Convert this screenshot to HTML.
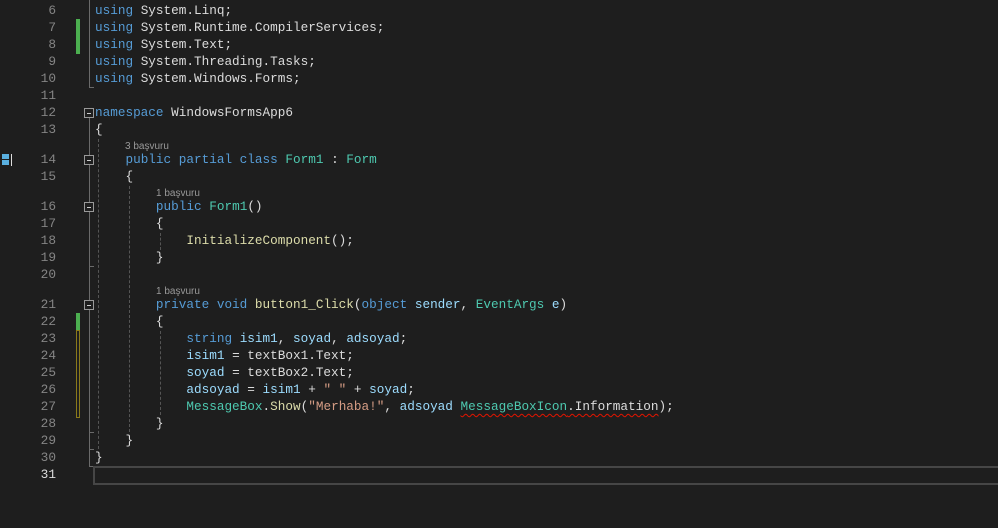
<!DOCTYPE html>
<html><head><meta charset="utf-8"><style>
html,body{margin:0;padding:0;background:#1e1e1e;width:998px;height:528px;overflow:hidden;position:relative}
.l{position:absolute;left:95px;height:17px;line-height:17px;font-family:"Liberation Mono",monospace;font-size:12.7px;color:#dcdcdc;white-space:pre}
.n{position:absolute;width:56px;text-align:right;left:0;height:17px;line-height:17px;font-family:"Liberation Mono",monospace;font-size:12.8px;color:#858585}
.lens{position:absolute;font-family:"Liberation Sans",sans-serif;font-size:10px;color:#999;height:13px;line-height:13px}
.k{color:#569cd6}.t{color:#4ec9b0}.v{color:#9cdcfe}.m{color:#dcdcaa}.s{color:#d69d85}
.box{position:absolute;left:84px;width:8px;height:8px;border:1px solid #999;background:#1e1e1e}
.box:after{content:"";position:absolute;left:2px;top:3.5px;width:4px;height:1px;background:#ccc}
.vl{position:absolute;width:1px;background:#6a6a6a}
.tick{position:absolute;height:1px;width:5px;background:#6a6a6a;left:89px}
.d{position:absolute;width:0;border-left:1px dashed #555}
.bar{position:absolute;left:76px;width:4px}
.sq{text-decoration:underline wavy #e51400;text-underline-offset:3px;text-decoration-thickness:1px}
</style></head><body>
<div class="vl" style="left:89px;top:0;height:87px"></div>
<div class="tick" style="top:87px"></div>
<div class="vl" style="left:89px;top:118px;height:348px"></div>
<div class="tick" style="top:266px"></div>
<div class="tick" style="top:432px"></div>
<div class="tick" style="top:449px"></div>
<div class="tick" style="top:466px"></div>
<div class="box" style="top:108px"></div>
<div class="box" style="top:155px"></div>
<div class="box" style="top:202px"></div>
<div class="box" style="top:300px"></div>
<div class="d" style="left:98px;top:139px;height:310px"></div>
<div class="d" style="left:129px;top:186px;height:246px"></div>
<div class="d" style="left:160px;top:233px;height:17px"></div>
<div class="d" style="left:160px;top:331px;height:84px"></div>
<div class="bar" style="top:19px;height:35px;background:#4caf50"></div>
<div class="bar" style="top:313px;height:17px;background:#4caf50"></div>
<div class="bar" style="top:330px;height:86px;border:1px solid #8a7a1a;width:2px;background:#1e1e1e"></div>
<div style="position:absolute;left:93px;top:466px;width:910px;height:15px;border:2px solid #464646"></div>
<div style="position:absolute;left:2px;top:154px;width:7px;height:5px;background:#5ab0e0"></div>
<div style="position:absolute;left:2px;top:160px;width:7px;height:5px;background:#5ab0e0"></div>
<div style="position:absolute;left:11px;top:154px;width:1px;height:12px;background:#ddd"></div>

<div class="n" style="top:2px">6</div><div class="l" style="top:2px"><span class="k">using</span> System.Linq;</div>
<div class="n" style="top:19px">7</div><div class="l" style="top:19px"><span class="k">using</span> System.Runtime.CompilerServices;</div>
<div class="n" style="top:36px">8</div><div class="l" style="top:36px"><span class="k">using</span> System.Text;</div>
<div class="n" style="top:53px">9</div><div class="l" style="top:53px"><span class="k">using</span> System.Threading.Tasks;</div>
<div class="n" style="top:70px">10</div><div class="l" style="top:70px"><span class="k">using</span> System.Windows.Forms;</div>
<div class="n" style="top:87px">11</div>
<div class="n" style="top:104px">12</div><div class="l" style="top:104px"><span class="k">namespace</span> WindowsFormsApp6</div>
<div class="n" style="top:121px">13</div><div class="l" style="top:121px">{</div>
<div class="lens" style="left:125px;top:140px">3 başvuru</div>
<div class="n" style="top:151px">14</div><div class="l" style="top:151px">    <span class="k">public partial class</span> <span class="t">Form1</span> : <span class="t">Form</span></div>
<div class="n" style="top:168px">15</div><div class="l" style="top:168px">    {</div>
<div class="lens" style="left:156px;top:187px">1 başvuru</div>
<div class="n" style="top:198px">16</div><div class="l" style="top:198px">        <span class="k">public</span> <span class="t">Form1</span>()</div>
<div class="n" style="top:215px">17</div><div class="l" style="top:215px">        {</div>
<div class="n" style="top:232px">18</div><div class="l" style="top:232px">            <span class="m">InitializeComponent</span>();</div>
<div class="n" style="top:249px">19</div><div class="l" style="top:249px">        }</div>
<div class="n" style="top:266px">20</div>
<div class="lens" style="left:156px;top:285px">1 başvuru</div>
<div class="n" style="top:296px">21</div><div class="l" style="top:296px">        <span class="k">private void</span> <span class="m">button1_Click</span>(<span class="k">object</span> <span class="v">sender</span>, <span class="t">EventArgs</span> <span class="v">e</span>)</div>
<div class="n" style="top:313px">22</div><div class="l" style="top:313px">        {</div>
<div class="n" style="top:330px">23</div><div class="l" style="top:330px">            <span class="k">string</span> <span class="v">isim1</span>, <span class="v">soyad</span>, <span class="v">adsoyad</span>;</div>
<div class="n" style="top:347px">24</div><div class="l" style="top:347px">            <span class="v">isim1</span> = textBox1.Text;</div>
<div class="n" style="top:364px">25</div><div class="l" style="top:364px">            <span class="v">soyad</span> = textBox2.Text;</div>
<div class="n" style="top:381px">26</div><div class="l" style="top:381px">            <span class="v">adsoyad</span> = <span class="v">isim1</span> + <span class="s">" "</span> + <span class="v">soyad</span>;</div>
<div class="n" style="top:398px">27</div><div class="l" style="top:398px">            <span class="t">MessageBox</span>.<span class="m">Show</span>(<span class="s">"Merhaba!"</span>, <span class="v">adsoyad</span> <span class="sq"><span class="t">MessageBoxIcon</span>.Information</span>);</div>
<div class="n" style="top:415px">28</div><div class="l" style="top:415px">        }</div>
<div class="n" style="top:432px">29</div><div class="l" style="top:432px">    }</div>
<div class="n" style="top:449px">30</div><div class="l" style="top:449px">}</div>
<div class="n" style="top:466px;color:#dcdcdc">31</div>
</body></html>
